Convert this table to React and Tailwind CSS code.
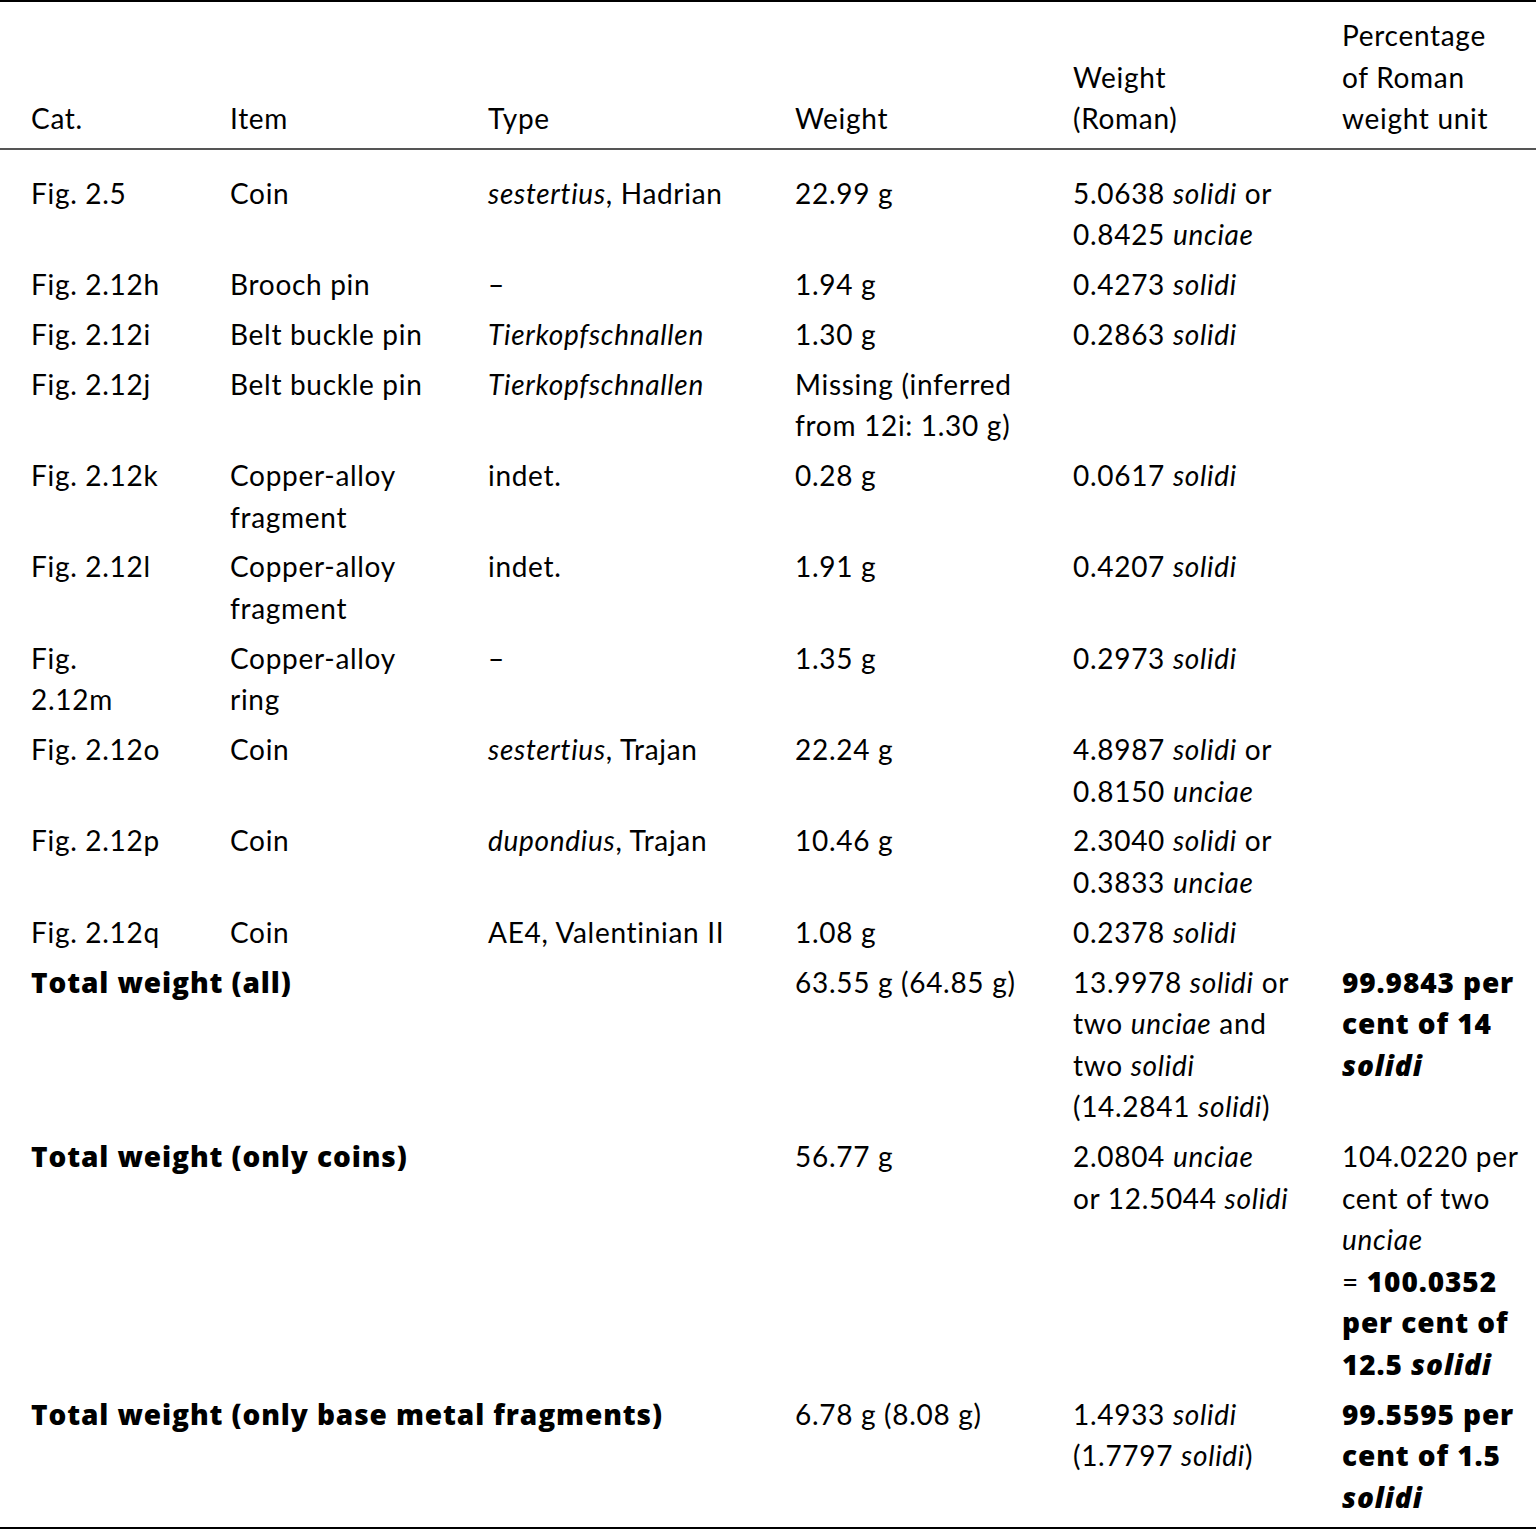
const I = ({ children }) => <em className="italic">{children}</em>;
const B = ({ children }) => (
  <span className="font-extrabold tracking-[0.9px]" style={{ fontFamily: "'Open Sans', Lato, sans-serif" }}>
    {children}
  </span>
);

const rows = [
  { cat: "Fig. 2.5", item: "Coin", type: <><I>sestertius</I>, Hadrian</>, weight: "22.99 g", roman: <>5.0638 <I>solidi</I> or<br />0.8425 <I>unciae</I></> },
  { cat: "Fig. 2.12h", item: "Brooch pin", type: "–", weight: "1.94 g", roman: <>0.4273 <I>solidi</I></> },
  { cat: "Fig. 2.12i", item: "Belt buckle pin", type: <I>Tierkopfschnallen</I>, weight: "1.30 g", roman: <>0.2863 <I>solidi</I></> },
  { cat: "Fig. 2.12j", item: "Belt buckle pin", type: <I>Tierkopfschnallen</I>, weight: <>Missing (inferred<br />from 12i: 1.30 g)</>, roman: "" },
  { cat: "Fig. 2.12k", item: <>Copper-alloy<br />fragment</>, type: "indet.", weight: "0.28 g", roman: <>0.0617 <I>solidi</I></> },
  { cat: "Fig. 2.12l", item: <>Copper-alloy<br />fragment</>, type: "indet.", weight: "1.91 g", roman: <>0.4207 <I>solidi</I></> },
  { cat: <>Fig.<br />2.12m</>, item: <>Copper-alloy<br />ring</>, type: "–", weight: "1.35 g", roman: <>0.2973 <I>solidi</I></> },
  { cat: "Fig. 2.12o", item: "Coin", type: <><I>sestertius</I>, Trajan</>, weight: "22.24 g", roman: <>4.8987 <I>solidi</I> or<br />0.8150 <I>unciae</I></> },
  { cat: "Fig. 2.12p", item: "Coin", type: <><I>dupondius</I>, Trajan</>, weight: "10.46 g", roman: <>2.3040 <I>solidi</I> or<br />0.3833 <I>unciae</I></> },
  { cat: "Fig. 2.12q", item: "Coin", type: "AE4, Valentinian II", weight: "1.08 g", roman: <>0.2378 <I>solidi</I></> },
];

const totals = [
  {
    label: "Total weight (all)",
    weight: "63.55 g (64.85 g)",
    roman: <>13.9978 <I>solidi</I> or<br />two <I>unciae</I> and<br />two <I>solidi</I><br />(14.2841 <I>solidi</I>)</>,
    pct: <B>99.9843 per<br />cent of 14<br /><I>solidi</I></B>,
  },
  {
    label: "Total weight (only coins)",
    weight: "56.77 g",
    roman: <>2.0804 <I>unciae</I><br />or 12.5044 <I>solidi</I></>,
    pct: <>104.0220 per<br />cent of two<br /><I>unciae</I><br />= <B>100.0352<br />per cent of<br />12.5 <I>solidi</I></B></>,
  },
  {
    label: "Total weight (only base metal fragments)",
    weight: "6.78 g (8.08 g)",
    roman: <>1.4933 <I>solidi</I><br />(1.7797 <I>solidi</I>)</>,
    pct: <B>99.5595 per<br />cent of 1.5<br /><I>solidi</I></B>,
  },
];

const cols = "grid grid-cols-[199px_258px_307px_278px_269px_1fr] pl-[31px]";

export default function App() {
  return (
    <div
      className="w-[1536px] bg-white text-black text-[28px] leading-[41.55px] tracking-[0.7px] whitespace-nowrap"
      style={{ fontFamily: "Lato, 'Noto Sans', sans-serif" }}
    >
      <div className="border-t-2 border-black">
        {/* header */}
        <div className={`${cols} items-end pt-[13px] pb-[8px] border-b-2 border-[#555]`}>
          <div>Cat.</div>
          <div>Item</div>
          <div>Type</div>
          <div>Weight</div>
          <div>Weight<br />(Roman)</div>
          <div>Percentage<br />of Roman<br />weight unit</div>
        </div>

        {/* body */}
        <div className="flex flex-col gap-[8.27px] pt-[23px] pb-[9px] border-b-2 border-black">
          {rows.map((r, i) => (
            <div key={i} className={cols}>
              <div>{r.cat}</div>
              <div>{r.item}</div>
              <div>{r.type}</div>
              <div>{r.weight}</div>
              <div>{r.roman}</div>
              <div />
            </div>
          ))}
          {totals.map((t, i) => (
            <div key={i} className={cols}>
              <div className="col-span-3">
                <B>{t.label}</B>
              </div>
              <div>{t.weight}</div>
              <div>{t.roman}</div>
              <div>{t.pct}</div>
            </div>
          ))}
        </div>
      </div>
    </div>
  );
}
